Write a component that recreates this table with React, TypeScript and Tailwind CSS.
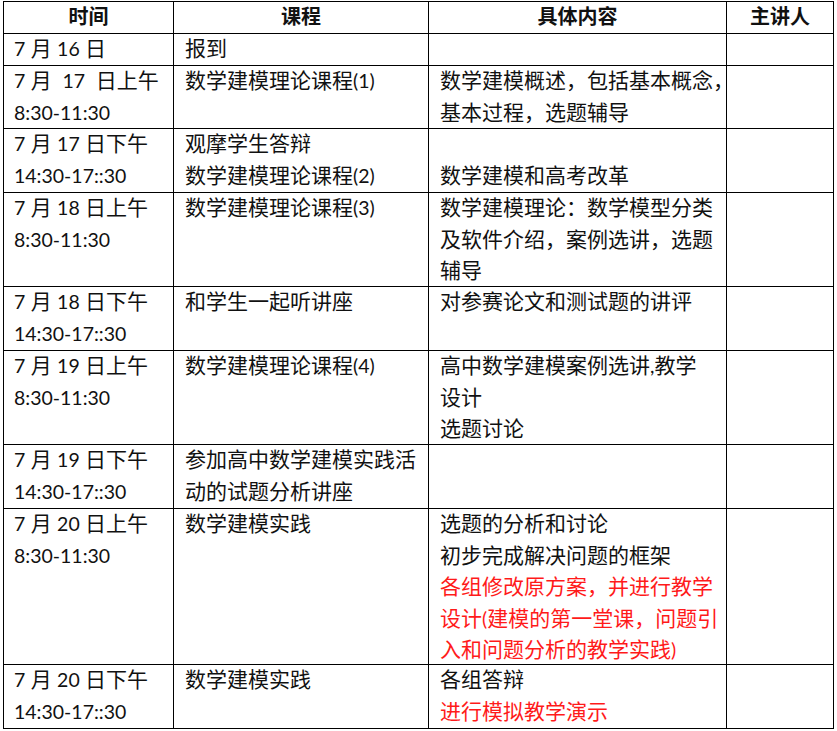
const cjk = "font-['Lato','Noto_Sans_CJK_SC',sans-serif]"

type Line = { t: string; red?: boolean }
type Row = { h: string; time: string[]; course: string[]; content: Line[] }

const rows: Row[] = [
  { h: 'h-[32px]', time: ['7 月 16 日'], course: ['报到'], content: [] },
  {
    h: 'h-[63px]',
    time: ['7 月  17  日上午', '8:30-11:30'],
    course: ['数学建模理论课程(1)'],
    content: [{ t: '数学建模概述，包括基本概念，' }, { t: '基本过程，选题辅导' }],
  },
  {
    h: 'h-[64px]',
    time: ['7 月 17 日下午', '14:30-17::30'],
    course: ['观摩学生答辩', '数学建模理论课程(2)'],
    content: [{ t: '' }, { t: '数学建模和高考改革' }],
  },
  {
    h: 'h-[94px]',
    time: ['7 月 18 日上午', '8:30-11:30'],
    course: ['数学建模理论课程(3)'],
    content: [{ t: '数学建模理论：数学模型分类' }, { t: '及软件介绍，案例选讲，选题' }, { t: '辅导' }],
  },
  {
    h: 'h-[64px]',
    time: ['7 月 18 日下午', '14:30-17::30'],
    course: ['和学生一起听讲座'],
    content: [{ t: '对参赛论文和测试题的讲评' }],
  },
  {
    h: 'h-[94px]',
    time: ['7 月 19 日上午', '8:30-11:30'],
    course: ['数学建模理论课程(4)'],
    content: [{ t: '高中数学建模案例选讲,教学' }, { t: '设计' }, { t: '选题讨论' }],
  },
  {
    h: 'h-[64px]',
    time: ['7 月 19 日下午', '14:30-17::30'],
    course: ['参加高中数学建模实践活', '动的试题分析讲座'],
    content: [],
  },
  {
    h: 'h-[156px]',
    time: ['7 月 20 日上午', '8:30-11:30'],
    course: ['数学建模实践'],
    content: [
      { t: '选题的分析和讨论' },
      { t: '初步完成解决问题的框架' },
      { t: '各组修改原方案，并进行教学', red: true },
      { t: '设计(建模的第一堂课，问题引', red: true },
      { t: '入和问题分析的教学实践)', red: true },
    ],
  },
  {
    h: 'h-[64px]',
    time: ['7 月 20 日下午', '14:30-17::30'],
    course: ['数学建模实践'],
    content: [{ t: '各组答辩' }, { t: '进行模拟教学演示', red: true }],
  },
]

// latin runs are set a little smaller, the way Calibri sits next to the CJK glyphs
function Txt({ s }: { s: string }) {
  const parts = s.match(/[\x21-\x7e]+|[^\x21-\x7e]+/g) ?? []
  return (
    <>
      {parts.map((p, i) =>
        /^[\x21-\x7e]+$/.test(p) ? (
          <span key={i} className="text-[19.5px] leading-none">
            {p}
          </span>
        ) : (
          <span key={i}>{p}</span>
        ),
      )}
    </>
  )
}

const cell = 'border-r border-b border-black whitespace-pre'
const line = 'h-[31.5px] leading-[28px]'

export default function App() {
  return (
    <div className={`min-h-screen bg-white pl-[3px] pt-[1px] text-[21px] text-[#111] ${cjk}`}>
      <div className="grid w-max grid-cols-[170px_255px_298px_107px] border-l border-t border-black">
        {['时间', '课程', '具体内容', '主讲人'].map((h) => (
          <div key={h} className={`${cell} h-[32px] text-center font-bold text-[20px] leading-[29px]`}>
            {h}
          </div>
        ))}
        {rows.map((r, i) => (
          <div key={i} className="contents">
            <div className={`${cell} ${r.h} pl-[10px]`}>
              {r.time.map((t) => (
                <div key={t} className={line}>
                  <Txt s={t} />
                </div>
              ))}
            </div>
            <div className={`${cell} ${r.h} pl-[11px]`}>
              {r.course.map((t) => (
                <div key={t} className={line}>
                  <Txt s={t} />
                </div>
              ))}
            </div>
            <div className={`${cell} ${r.h} pl-[11px]`}>
              {r.content.map((l, j) => (
                <div key={j} className={`${line} ${l.red ? 'text-[#ff1a1a]' : ''}`}>
                  <Txt s={l.t} />
                </div>
              ))}
            </div>
            <div className={`${cell} ${r.h}`} />
          </div>
        ))}
      </div>
    </div>
  )
}
